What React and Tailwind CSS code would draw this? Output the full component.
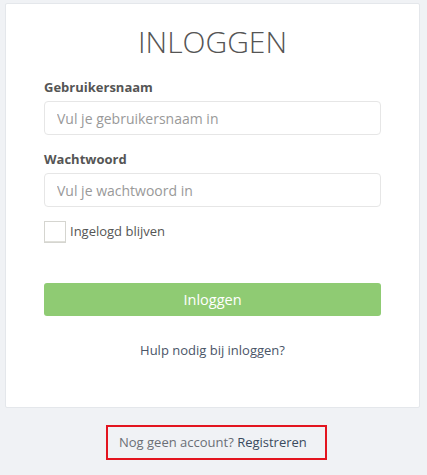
export default function App() {
  return (
    <div
      className="min-h-[475px] w-[427px] bg-[#f0f2f5] pt-[3px] pl-[5px] pr-[7px]"
      style={{ fontFamily: '"Open Sans", "Noto Sans", sans-serif' }}
    >
      <div className="h-[405px] rounded-[2px] border border-[#e4e7eb] bg-white px-[38px]">
        <h1 className="mt-[18px] text-center text-[30px] font-light leading-[40px] text-[#555]">
          INLOGGEN
        </h1>
        <form className="mt-[16px]">
          <label className="block text-[13px] font-bold leading-[18px] text-[#555]">
            Gebruikersnaam
          </label>
          <input
            className="mt-[5px] block h-[34px] w-full rounded-[4px] border border-[#e6e6e6] px-[12px] text-[14px] text-[#555] outline-none placeholder:text-[#999]"
            placeholder="Vul je gebruikersnaam in"
          />
          <label className="mt-[15px] block text-[13px] font-bold leading-[18px] text-[#555]">
            Wachtwoord
          </label>
          <input
            type="password"
            className="mt-[5px] block h-[34px] w-full rounded-[4px] border border-[#e6e6e6] px-[12px] text-[14px] text-[#555] outline-none placeholder:text-[#999]"
            placeholder="Vul je wachtwoord in"
          />
          <div className="mt-[14px] flex items-center">
            <span className="block h-[22px] w-[22px] border border-[#d5d5d0] bg-white shadow-[inset_0_-1px_0_#e0e0da]" />
            <span className="ml-[4px] text-[13px] text-[#555]">Ingelogd blijven</span>
          </div>
          <button
            type="button"
            className="mt-[40px] block h-[33px] w-full rounded-[3px] bg-[#8fcb73] text-[14.5px] text-white"
          >
            Inloggen
          </button>
          <div className="mt-[25px] text-center text-[13px] text-[#4a5568]">
            Hulp nodig bij inloggen?
          </div>
        </form>
      </div>
      <div className="mt-[17px] flex justify-center">
        <div className="ml-[8px] flex h-[35px] w-[221px] items-center border-[2px] border-[#e3141f] pl-[11px] text-[13px]">
          <span className="text-[#6b6f76]">Nog geen account?&nbsp;</span>
          <span className="text-[#3a4a5e]">Registreren</span>
        </div>
      </div>
    </div>
  );
}
